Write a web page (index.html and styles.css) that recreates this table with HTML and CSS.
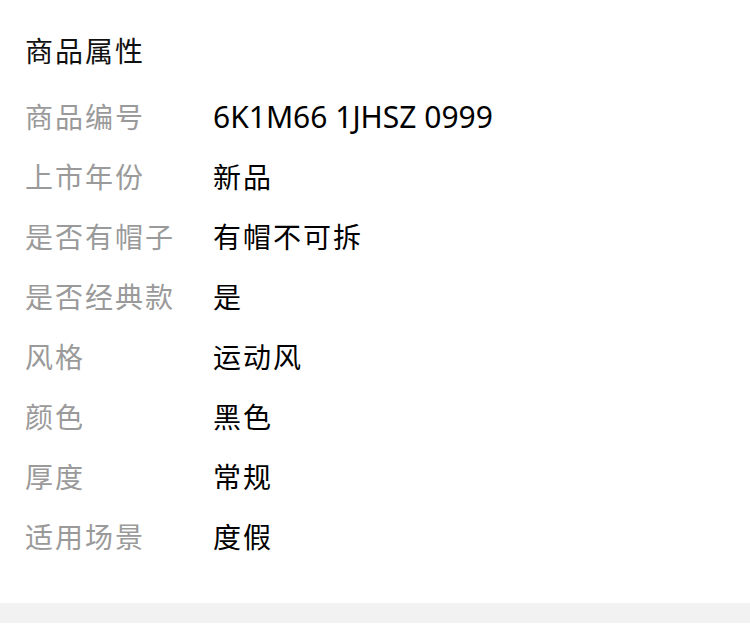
FILE: index.html
```html
<!DOCTYPE html>
<html lang="zh-CN">
<head>
    <meta charset="UTF-8">
    <meta name="viewport" content="width=device-width, initial-scale=1.0">
    <title>商品属性</title>
    <link rel="stylesheet" href="styles.css">
</head>
<body>
    <div class="attr-panel">
        <h2 class="attr-title">商品属性</h2>
        <ul class="attr-list">
            <li class="attr-row">
                <span class="attr-label">商品编号</span>
                <span class="attr-value attr-code">6K1M66 1JHSZ 0999</span>
            </li>
            <li class="attr-row">
                <span class="attr-label">上市年份</span>
                <span class="attr-value">新品</span>
            </li>
            <li class="attr-row">
                <span class="attr-label">是否有帽子</span>
                <span class="attr-value">有帽不可拆</span>
            </li>
            <li class="attr-row">
                <span class="attr-label">是否经典款</span>
                <span class="attr-value">是</span>
            </li>
            <li class="attr-row">
                <span class="attr-label">风格</span>
                <span class="attr-value">运动风</span>
            </li>
            <li class="attr-row">
                <span class="attr-label">颜色</span>
                <span class="attr-value">黑色</span>
            </li>
            <li class="attr-row">
                <span class="attr-label">厚度</span>
                <span class="attr-value">常规</span>
            </li>
            <li class="attr-row">
                <span class="attr-label">适用场景</span>
                <span class="attr-value">度假</span>
            </li>
        </ul>
    </div>
    <div class="divider"></div>
</body>
</html>
```

FILE: styles.css
```css
* {
    margin: 0;
    padding: 0;
    box-sizing: border-box;
    font-family: "Noto Sans CJK SC", "Noto Sans", sans-serif;
}

body {
    background: #fff;
}

.attr-panel {
    padding: 20px 25px 37px;
}

.attr-title {
    font-size: 28px;
    font-weight: 400;
    line-height: 60px;
    letter-spacing: 2px;
    color: #111;
    margin-bottom: 6px;
}

.attr-list {
    list-style: none;
}

.attr-row {
    display: flex;
    align-items: center;
    height: 60px;
    font-size: 28px;
    letter-spacing: 2px;
}

.attr-label {
    width: 188px;
    flex-shrink: 0;
    color: #9a9a9a;
}

.attr-value {
    color: #000;
}

.attr-code {
    font-family: "Noto Sans", sans-serif;
    font-size: 30px;
    letter-spacing: 0;
}

.divider {
    height: 20px;
    background: #f2f2f2;
}
```
